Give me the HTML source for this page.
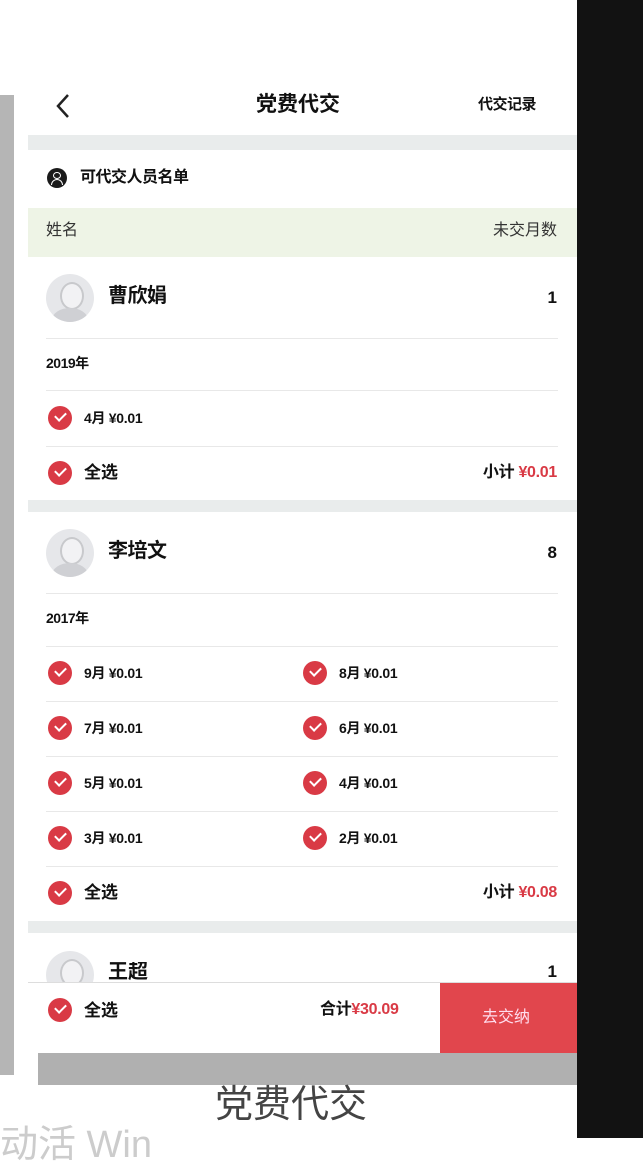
<!DOCTYPE html>
<html><head><meta charset="utf-8"><style>
*{margin:0;padding:0;box-sizing:border-box}
body{width:643px;height:1138px;background:#fff;position:relative;overflow:hidden;font-family:"Liberation Sans","Noto Sans CJK SC",sans-serif;color:#111}
.a{position:absolute}
.t{position:absolute;white-space:nowrap;line-height:1}
.rt{position:absolute;white-space:nowrap;line-height:1;right:86px}
.b{font-weight:bold}
.ln{position:absolute;left:46px;width:512px;height:1px;background:#e8e8e8}
.gd{position:absolute;left:28px;width:549px;background:#e9ecec}
.ck{position:absolute;width:24px;height:24px;border-radius:50%;background:#d93a45}
.ck:after{content:"";position:absolute;left:7px;top:6px;width:9px;height:5px;border-left:2.5px solid #fff;border-bottom:2.5px solid #fff;transform:rotate(-45deg)}
.av{position:absolute;left:46px;width:48px;height:48px;border-radius:50%;background:#e6e7ea;overflow:hidden}
.av:before{content:"";position:absolute;left:14px;top:8px;width:20px;height:24px;border-radius:50%;border:2px solid #c8c9cc;background:#f2f2f4}
.av:after{content:"";position:absolute;left:6px;top:34px;width:36px;height:24px;border-radius:50%;background:#cfd0d4}
.r{color:#d93a45}
.m{font-size:14px;letter-spacing:-0.3px}
</style></head><body>
<div class="a" style="left:0;top:95px;width:14px;height:980px;background:#b5b5b5"></div>
<div class="a" style="left:38px;top:1050px;width:539px;height:35px;background:#b0b0b0"></div>
<div class="a" style="left:577px;top:0;width:66px;height:1138px;background:#121212"></div>
<div class="a" style="left:28px;top:72px;width:549px;height:981px;background:#fff"></div>
<svg class="a" style="left:52px;top:92px" width="20" height="28"><path d="M16 3 L6 14 L16 25" fill="none" stroke="#222" stroke-width="2.5"/></svg>
<div class="t b" style="left:256px;top:94px;font-size:21px">党费代交</div>
<div class="t b" style="left:478px;top:97px;font-size:15px;letter-spacing:-0.5px">代交记录</div>
<div class="gd" style="top:135px;height:15px"></div>
<div class="a" style="left:47px;top:168px;width:20px;height:20px;border-radius:50%;background:#1a1a1a"></div>
<div class="a" style="left:53px;top:172px;width:8px;height:7px;border-radius:50%;border:1.5px solid #fff"></div>
<div class="a" style="left:51px;top:179px;width:12px;height:6px;border-radius:6px 6px 0 0;border:1.5px solid #fff;border-bottom:none"></div>
<div class="t b" style="left:80px;top:170px;font-size:16px;letter-spacing:-0.5px">可代交人员名单</div>
<div class="a" style="left:28px;top:208px;width:549px;height:49px;background:#eef4e6"></div>
<div class="t" style="left:46px;top:223px;font-size:16px;color:#333">姓名</div>
<div class="rt" style="top:223px;font-size:16px;color:#333">未交月数</div>
<div class="av" style="top:274px"></div>
<div class="t b" style="left:108px;top:286px;font-size:20px;letter-spacing:-0.5px">曹欣娟</div>
<div class="rt b" style="top:289px;font-size:17px">1</div>
<div class="ln" style="top:338px"></div>
<div class="t b" style="left:46px;top:356px;font-size:14px;letter-spacing:-0.5px">2019年</div>
<div class="ln" style="top:390px"></div>
<div class="ck" style="left:48px;top:406px"></div><div class="t b m" style="left:84px;top:411px">4月 ¥0.01</div>
<div class="ln" style="top:446px"></div>
<div class="ck" style="left:48px;top:461px"></div><div class="t b" style="left:84px;top:464px;font-size:17px">全选</div>
<div class="rt b" style="top:465px;font-size:16px;letter-spacing:-0.3px">小计 <span class="r">¥0.01</span></div>
<div class="gd" style="top:500px;height:12px"></div>
<div class="av" style="top:529px"></div>
<div class="t b" style="left:108px;top:541px;font-size:20px;letter-spacing:-0.5px">李培文</div>
<div class="rt b" style="top:544px;font-size:17px">8</div>
<div class="ln" style="top:593px"></div>
<div class="t b" style="left:46px;top:611px;font-size:14px;letter-spacing:-0.5px">2017年</div>
<div class="ln" style="top:646px"></div>
<div class="ck" style="left:48px;top:661px"></div><div class="t b m" style="left:84px;top:666px">9月 ¥0.01</div>
<div class="ck" style="left:303px;top:661px"></div><div class="t b m" style="left:339px;top:666px">8月 ¥0.01</div>
<div class="ln" style="top:701px"></div>
<div class="ck" style="left:48px;top:716px"></div><div class="t b m" style="left:84px;top:721px">7月 ¥0.01</div>
<div class="ck" style="left:303px;top:716px"></div><div class="t b m" style="left:339px;top:721px">6月 ¥0.01</div>
<div class="ln" style="top:756px"></div>
<div class="ck" style="left:48px;top:771px"></div><div class="t b m" style="left:84px;top:776px">5月 ¥0.01</div>
<div class="ck" style="left:303px;top:771px"></div><div class="t b m" style="left:339px;top:776px">4月 ¥0.01</div>
<div class="ln" style="top:811px"></div>
<div class="ck" style="left:48px;top:826px"></div><div class="t b m" style="left:84px;top:831px">3月 ¥0.01</div>
<div class="ck" style="left:303px;top:826px"></div><div class="t b m" style="left:339px;top:831px">2月 ¥0.01</div>
<div class="ln" style="top:866px"></div>
<div class="ck" style="left:48px;top:881px"></div><div class="t b" style="left:84px;top:884px;font-size:17px">全选</div>
<div class="rt b" style="top:885px;font-size:16px;letter-spacing:-0.3px">小计 <span class="r">¥0.08</span></div>
<div class="gd" style="top:921px;height:12px"></div>
<div style="position:absolute;left:28px;top:933px;width:549px;height:49px;overflow:hidden">
<div class="av" style="left:18px;top:18px"></div>
</div>
<div class="t b" style="left:108px;top:962px;font-size:20px;height:19px;overflow:hidden">王超</div>
<div class="rt b" style="top:963px;font-size:17px">1</div>
<div class="a" style="left:28px;top:982px;width:549px;height:1px;background:#ddd"></div>
<div class="ck" style="left:48px;top:998px"></div><div class="t b" style="left:84px;top:1002px;font-size:17px">全选</div>
<div class="t b" style="left:320px;top:1002px;font-size:16px;letter-spacing:-0.3px">合计<span class="r">¥30.09</span></div>
<div class="a" style="left:440px;top:983px;width:137px;height:70px;background:#e1464d"></div>
<div class="t" style="left:482px;top:1010px;font-size:16px;color:#fde">去交纳</div>
<div class="t" style="left:215px;top:1086px;font-size:38px;color:#444">党费代交</div>
<div class="t" style="left:0;top:1126px;font-size:38px;color:#ccc">动活 Win</div>
</body></html>
